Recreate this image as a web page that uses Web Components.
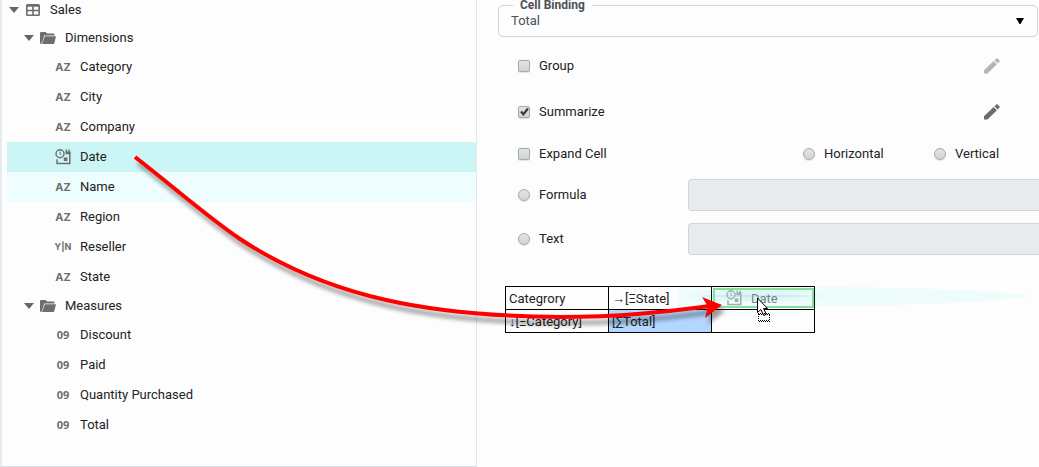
<!DOCTYPE html>
<html lang="en">
<head>
<meta charset="utf-8">
<title>Cell Binding</title>
<style>
  html, body { height: 100%; }
  body { margin: 0; background: #fdfdfd; color: #222; font: 13px/20px Roboto, "Liberation Sans", sans-serif; overflow: hidden; }
</style>
</head>
<body>
<binding-designer></binding-designer>
<script>
const calendarIcon = `
  <g fill="none" stroke="currentColor">
    <circle cx="5" cy="4.700" r="4" stroke-width="1.400"/>
    <path d="M5 2.500v2.500l1.300 1" stroke-width="1"/>
    <path d="M2 10.200v4.400h12.800V3.500" stroke-width="1.500"/>
  </g>
  <path fill="currentColor" d="M10.300 2.600h5.200v2.700h-4.800zM10.500 .6h1.400v3h-1.400zM13.300 .6h1.400v3h-1.400zM8.800 8.500h3.600V12H8.800z"/>`;
const icons = {
  table: `<path fill="currentColor" fill-rule="evenodd" d="M2.500 2h11A1.500 1.500 0 0 1 15 3.500v9a1.500 1.500 0 0 1-1.500 1.500h-11A1.500 1.500 0 0 1 1 12.500v-9A1.500 1.500 0 0 1 2.500 2zM2.600 4.800v2.900h4.600V4.800zM8.800 4.800v2.900h4.600V4.800zM2.600 9.200v3.200h4.600V9.200zM8.800 9.200v3.200h4.600V9.200z"/>`,
  folder: `<path fill="currentColor" d="M1 2h4.600l1.500 1.500h6.400a1 1 0 0 1 1 1v.9H4.200L2.600 11 1.200 14H1a1 1 0 0 1-1-1V3a1 1 0 0 1 1-1zM4.800 6.200H16L14.300 13.200a1 1 0 0 1-1 .8H2z"/>`,
  date: calendarIcon
};
function define(name, css, html, setup) {
  const template = document.createElement('template');
  template.innerHTML = `<style>*{box-sizing:border-box}${css}</style>${html}`;
  customElements.define(name, class extends HTMLElement {
    constructor() {
      super();
      this.attachShadow({ mode: 'open' }).append(template.content.cloneNode(true));
    }
    connectedCallback() { if (setup) setup(this, this.shadowRoot); }
  });
}

define('tree-row', `
  :host { display: flex; align-items: center; height: 28px; color: #222; }
  :host([level="2"]) { height: 30px; }
  :host([state="dragged"]) { background: #ccf6f5; }
  :host([state="hover"]) { background: #eefdfd; }
  .row { display: flex; align-items: center; padding-left: 2px; }
  :host([level="1"]) .row { padding-left: 17px; }
  :host([level="2"]) .row { padding-left: 32px; }
  .toggle { width: 16px; height: 16px; padding: 0; border: 0; background: none; color: #666; }
  .toggle svg { display: block; width: 10px; height: 16px; }
  :host([level="2"]) .toggle { visibility: hidden; }
  .icon { display: flex; align-items: center; justify-content: center; width: 16px; height: 16px; margin-right: 9px; color: #6e6e6e; font: bold 11px/16px Inter, "Liberation Sans", sans-serif; }
  .icon svg { width: 16px; height: 16px; }
  .number { font-family: "Open Sans", sans-serif; }
  .bool { font-size: 9px; white-space: nowrap; }
`, `<div class="row"><button class="toggle" aria-label="Collapse"><svg viewBox="0 0 10 16"><path fill="currentColor" d="M0 5h10L5 11z"/></svg></button><span class="icon"></span><slot></slot></div>`,
(host, root) => {
  const kind = host.getAttribute('kind');
  const icon = root.querySelector('.icon');
  const types = { text: 'AZ', number: '09', bool: 'Y|N' };
  if (types[kind]) { icon.textContent = types[kind]; icon.classList.add(kind); }
  else icon.innerHTML = `<svg viewBox="0 0 16 16">${icons[kind]}</svg>`;
});

define('field-tree', `
  :host { display: block; overflow: hidden; padding-left: 5px; border-left: 2px solid #e7ebef; border-right: 1px solid #e4e7ea; border-bottom: 1px solid #dcdfe2; }
  nav { margin-top: -4px; }
`, `<nav aria-label="Fields">
  <tree-row level="0" kind="table">Sales</tree-row>
  <tree-row level="1" kind="folder">Dimensions</tree-row>
  <tree-row level="2" kind="text">Category</tree-row>
  <tree-row level="2" kind="text">City</tree-row>
  <tree-row level="2" kind="text">Company</tree-row>
  <tree-row level="2" kind="date" state="dragged">Date</tree-row>
  <tree-row level="2" kind="text" state="hover">Name</tree-row>
  <tree-row level="2" kind="text">Region</tree-row>
  <tree-row level="2" kind="bool">Reseller</tree-row>
  <tree-row level="2" kind="text">State</tree-row>
  <tree-row level="1" kind="folder">Measures</tree-row>
  <tree-row level="2" kind="number">Discount</tree-row>
  <tree-row level="2" kind="number">Paid</tree-row>
  <tree-row level="2" kind="number">Quantity Purchased</tree-row>
  <tree-row level="2" kind="number">Total</tree-row>
</nav>`);

define('choice-field', `
  :host { display: block; }
  label { display: flex; align-items: center; gap: 9px; position: relative; }
  input { appearance: none; flex: none; width: 12px; height: 12px; margin: 0; border: 1px solid #a5a9ab; border-radius: 2px; background: linear-gradient(#e2e5e7, #cfd4d7); box-shadow: 0 1px 1px #e0e2e3; }
  input[type="radio"] { border-radius: 50%; }
  svg { position: absolute; left: 1px; top: 4px; width: 11px; height: 11px; display: none; pointer-events: none; }
  input:checked + svg { display: block; }
`, `<label><input><svg viewBox="0 0 11 11"><path d="M2 5.500l2.400 2.700L9 2.500" fill="none" stroke="#3c3c3c" stroke-width="2.200"/></svg><slot></slot></label>`,
(host, root) => {
  const input = root.querySelector('input');
  input.type = host.getAttribute('type');
  input.checked = host.hasAttribute('checked');
});

define('edit-button', `
  :host { display: block; color: #6b6b6b; }
  :host([disabled]) { color: #b5b5b5; }
  button { display: block; padding: 0; border: 0; background: none; color: inherit; }
  svg { display: block; width: 16px; height: 16px; }
`, `<button aria-label="Edit"><svg viewBox="0 0 16 16"><path fill="currentColor" d="M0 12.300L9.600 3l3.300 3.200L3.500 15.600H0zM10.500 2.200l1.700-1.700q.7-.7 1.400 0l1.800 1.800q.7.700 0 1.400l-1.700 1.700z"/></svg></button>`,
(host, root) => { root.querySelector('button').disabled = host.hasAttribute('disabled'); });

define('cell-select', `
  :host { display: block; }
  fieldset { margin: -2px 1px 0 21px; padding: 0; min-width: 0; border: 1px solid #ced4da; border-radius: 5px; }
  legend { margin-left: 14px; padding: 0 7px; font-size: 12px; line-height: 14px; font-weight: bold; color: #495057; }
  .box { position: relative; height: 24px; }
  select { appearance: none; display: block; width: 100%; height: 18px; padding: 0 12px; border: 0; background: none; color: #495057; font: inherit; line-height: 18px; }
  svg { position: absolute; right: 12px; top: 6px; width: 10px; height: 6px; pointer-events: none; }
`, `<fieldset><legend id="title">Cell Binding</legend><div class="box"><select aria-labelledby="title"><option>Total</option></select><svg viewBox="0 0 10 6"><path d="M1 0h8L5.500 6h-1z"/></svg></div></fieldset>`);

define('binding-form', `
  :host { display: block; padding: 6px 0 0 41px; }
  .row { display: flex; align-items: center; justify-content: space-between; height: 46px; padding-right: 39px; }
  .expand { display: grid; grid-template-columns: 285px 131px 1fr; height: 38px; padding: 0; }
  .entry { display: grid; grid-template-columns: 170px 1fr; height: 44px; padding: 0; }
  .entry input { width: 100%; height: 32px; border: 1px solid #ced4da; border-right: 0; border-radius: 4px 0 0 4px; background: #e7ebee; font: inherit; }
`, `
  <div class="row"><choice-field type="checkbox">Group</choice-field><edit-button disabled></edit-button></div>
  <div class="row"><choice-field type="checkbox" checked>Summarize</choice-field><edit-button></edit-button></div>
  <div class="row expand"><choice-field type="checkbox">Expand Cell</choice-field><choice-field type="radio">Horizontal</choice-field><choice-field type="radio">Vertical</choice-field></div>
  <div class="row entry"><choice-field type="radio">Formula</choice-field><input aria-label="Formula" disabled></div>
  <div class="row entry"><choice-field type="radio">Text</choice-field><input aria-label="Text" disabled></div>`);

define('layout-table', `
  :host { display: block; padding: 25px 0 0 28px; }
  table { width: 310px; border-collapse: collapse; table-layout: fixed; }
  td { height: 23px; padding: 2px 3px 0; border: 1px solid #000; line-height: 20px; white-space: nowrap; }
  .selected { background: #b3d7ff; }
`, `<table><tbody>
  <tr><td>Categrory</td><td>→[ΞState]</td><td></td></tr>
  <tr><td>↓[ΞCategory]</td><td class="selected">[∑Total]</td><td></td></tr>
</tbody></table>`);

define('drag-overlay', `
  :host { position: absolute; inset: 0; overflow: hidden; pointer-events: none; }
  svg { display: block; width: 100%; height: 100%; }
  text { font: 13px Roboto, "Liberation Sans", sans-serif; }
`, `<svg aria-hidden="true">
  <defs>
    <filter id="blur" x="-10%" y="-20%" width="120%" height="150%"><feGaussianBlur stdDeviation="2"/></filter>
    <linearGradient id="line"><stop offset="0" stop-color="#ccf6f5" stop-opacity="0"/><stop offset=".3" stop-color="#c4eeee"/><stop offset=".7" stop-color="#c4eeee"/><stop offset="1" stop-color="#ccf6f5" stop-opacity="0"/></linearGradient>
    <g id="arrow">
      <path d="M135 157C175 188 205 215 240 239C330 298 430 316 560 317C620 317 665 312 710 306" fill="none" stroke="currentColor" stroke-width="4"/>
      <path d="M722 305L702 297L708 306.500L705 318z" fill="currentColor"/>
    </g>
  </defs>
  <path d="M678 287H840Q965 288 1033 296Q965 305 840 306H678z" fill="#ebfcfc" opacity=".85"/>
  <rect x="683" y="295" width="146" height="2" fill="url(#line)"/>
  <rect x="690" y="291" width="132" height="10" fill="url(#line)" opacity=".4"/>
  <path d="M711.500 286v23M814.500 286v23" stroke="#111" fill="none"/>
  <rect x="714" y="289" width="99" height="18" fill="none" stroke="#86df98" stroke-width="2"/>
  <g transform="translate(726 290)" color="#a3adad">${calendarIcon}</g>
  <text x="751" y="303" fill="#7c8585">Date</text>
  <use href="#arrow" color="#000" opacity=".4" filter="url(#blur)" transform="translate(3 6)"/>
  <use href="#arrow" color="#ff0000"/>
  <path d="M757.500 298v14.500l3.300-3 3 6 2.500-1.200-2.700-5.800h4z" fill="#fff" stroke="#000"/>
  <path d="M759 314.500h12M758 320.500h12M758.500 314v7M769.500 315v7" fill="none" stroke="#000" stroke-dasharray="1 1"/>
  <path d="M758 313.500h12M759 321.500h12" fill="none" stroke="#000" stroke-dasharray="1 1"/>
</svg>`);

define('binding-designer', `
  :host { display: grid; position: relative; grid-template-columns: 477px minmax(0, 1fr); min-height: 100%; }
  main { min-width: 0; }
`, `<field-tree></field-tree><main><cell-select></cell-select><binding-form></binding-form><layout-table></layout-table></main><drag-overlay></drag-overlay>`);
</script>
</body>
</html>
